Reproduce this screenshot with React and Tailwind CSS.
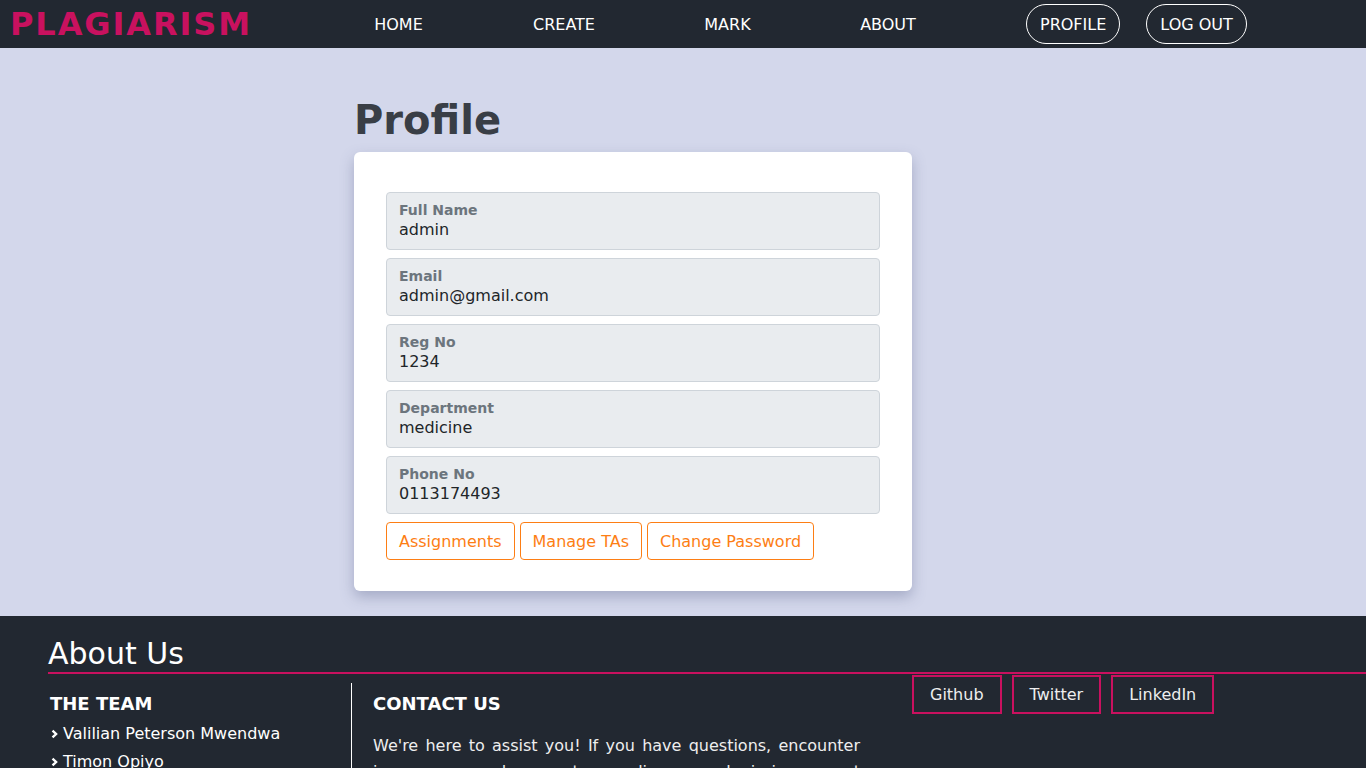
import React from 'react';

const fields = [
  { label: 'Full Name', value: 'admin' },
  { label: 'Email', value: 'admin@gmail.com' },
  { label: 'Reg No', value: '1234' },
  { label: 'Department', value: 'medicine' },
  { label: 'Phone No', value: '0113174493' },
];

const team = ['Valilian Peterson Mwendwa', 'Timon Opiyo', 'Brian Kiprono', 'Mercy Wanjiru'];

function Chevron() {
  return (
    <svg viewBox="0 0 10 10" className="w-[9px] h-[10px] mr-[4px] shrink-0">
      <path d="M2.8 1.2 L6.8 5 L2.8 8.8" fill="none" stroke="currentColor" strokeWidth="2.6" />
    </svg>
  );
}

export default function App() {
  return (
    <div className="min-h-screen bg-[#d3d7eb] font-['DejaVu_Sans',sans-serif]">
      {/* Navbar */}
      <nav className="h-12 bg-[#222831] flex items-center">
        <span className="pl-[10px] text-[32px] font-bold tracking-[1.9px] text-[#c9115f] leading-none">PLAGIARISM</span>
        <div className="flex ml-[64px] pt-[2px] text-white text-base">
          <span className="w-[165px] text-center">HOME</span>
          <span className="w-[166px] text-center">CREATE</span>
          <span className="w-[161px] text-center">MARK</span>
          <span className="w-[160px] text-center">ABOUT</span>
        </div>
        <div className="flex ml-[58px] gap-[26px] text-white text-base">
          <span className="h-[40px] px-[13px] pt-[1px] flex items-center border border-white rounded-full">PROFILE</span>
          <span className="h-[40px] px-[13px] pt-[1px] flex items-center border border-white rounded-full">LOG OUT</span>
        </div>
      </nav>

      {/* Main */}
      <main className="pt-12 pb-[25px] pl-[354px]">
        <h1 className="text-[40px] leading-[48px] font-bold text-[#393e46] mb-2">Profile</h1>
        <div className="w-[558px] bg-white rounded-md shadow-[0_6px_14px_rgba(80,90,130,0.35)] px-8 pt-10 pb-[31px]">
          <div className="flex flex-col gap-2">
            {fields.map((f) => (
              <div key={f.label} className="bg-[#e9ecef] border border-[#ced4da] rounded-[4px] px-3 pt-2 pb-[9px]">
                <div className="text-sm font-bold text-[#6c757d] leading-[19px]">{f.label}</div>
                <div className="text-base text-[#212529] leading-[20px]">{f.value}</div>
              </div>
            ))}
          </div>
          <div className="flex gap-[5px] mt-2">
            {['Assignments', 'Manage TAs', 'Change Password'].map((b) => (
              <button key={b} className="h-[38px] px-3 pt-[1px] border border-[#fd7e14] rounded-[4px] text-[#fd7e14] text-base">
                {b}
              </button>
            ))}
          </div>
        </div>
      </main>

      {/* Footer */}
      <footer className="bg-[#222831] text-white pl-12 pb-10">
        <h2 className="pt-5 text-[30px] leading-[36px] border-b-2 border-[#c9115f]">About Us</h2>
        <div className="flex">
          <div className="w-[304px] pl-[2px] pt-[10px] mt-[9px] border-r border-white">
            <h3 className="text-lg font-bold leading-[22px]">THE TEAM</h3>
            <ul className="mt-[5px]">
              {team.map((t) => (
                <li key={t} className="flex items-center leading-[28px]">
                  <Chevron />
                  {t}
                </li>
              ))}
            </ul>
          </div>
          <div className="w-[508px] pl-[21px] pt-[10px] mt-[9px]">
            <h3 className="text-lg font-bold leading-[22px]">CONTACT US</h3>
            <p className="mt-[18px] text-justify leading-[26px] text-[#eeeeee]">
              We're here to assist you! If you have questions, encounter issues, or need support regarding our plagiarism report
              system, please reach out to our team. We will get back to you as soon as possible.
            </p>
          </div>
          <div className="flex gap-[10px] ml-[52px] mt-[1px] items-start">
            {['Github', 'Twitter', 'LinkedIn'].map((s) => (
              <span key={s} className="h-[39px] px-4 pt-[1px] flex items-center border-2 border-[#c9115f] text-[#eeeeee]">
                {s}
              </span>
            ))}
          </div>
        </div>
      </footer>
    </div>
  );
}
